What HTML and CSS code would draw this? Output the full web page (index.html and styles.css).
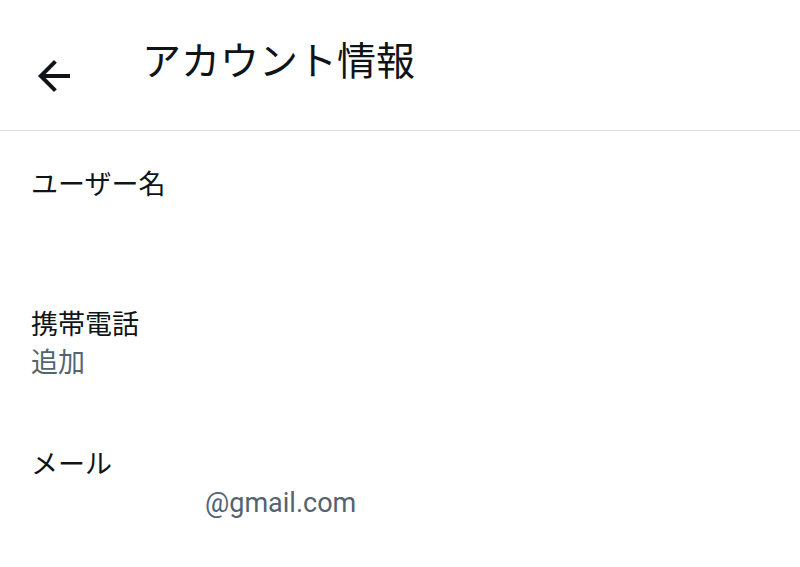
FILE: index.html
```html
<!DOCTYPE html>
<html lang="ja">
<head>
<meta charset="utf-8">
<title>アカウント情報</title>
<link rel="stylesheet" href="styles.css">
</head>
<body>
<header class="topbar">
  <button class="back" aria-label="戻る">
    <svg viewBox="0 0 24 24" width="48" height="48"><path d="M20 11H7.83l5.59-5.59L12 4l-8 8 8 8 1.41-1.41L7.83 13H20v-2z" fill="#0f1419"/></svg>
  </button>
  <h1 class="title">アカウント情報</h1>
</header>
<main class="list">
  <section class="item">
    <div class="label">ユーザー名</div>
    <div class="value">&nbsp;</div>
  </section>
  <section class="item">
    <div class="label">携帯電話</div>
    <div class="value">追加</div>
  </section>
  <section class="item">
    <div class="label">メール</div>
    <div class="value"><span class="redacted"></span>@gmail.com</div>
  </section>
</main>
</body>
</html>
```
FILE: styles.css
```css
html, body {
  margin: 0;
  padding: 0;
  background: #ffffff;
}
body {
  font-family: "Noto Sans CJK JP", "Noto Sans", sans-serif;
  color: #0f1419;
}
.topbar {
  display: flex;
  align-items: flex-start;
  height: 130px;
  border-bottom: 1px solid #dedede;
}
.back {
  margin: 52px 0 0 30px;
  padding: 0;
  border: 0;
  background: none;
  width: 48px;
  height: 48px;
  display: block;
}
.back svg {
  display: block;
}
.title {
  margin: 39px 0 0 64px;
  font-size: 39px;
  line-height: 39px;
  font-weight: 400;
  letter-spacing: 0;
}
.list {
  display: flex;
  flex-direction: column;
}
.item {
  padding: 32px 31px 28px;
}
.label {
  font-size: 27px;
  line-height: 40px;
  height: 40px;
  white-space: nowrap;
}
.value {
  font-size: 27px;
  line-height: 40px;
  height: 40px;
  color: #536471;
  white-space: nowrap;
  font-family: Roboto, "Noto Sans CJK JP", sans-serif;
}
.redacted {
  display: inline-block;
  width: 174px;
}
```
